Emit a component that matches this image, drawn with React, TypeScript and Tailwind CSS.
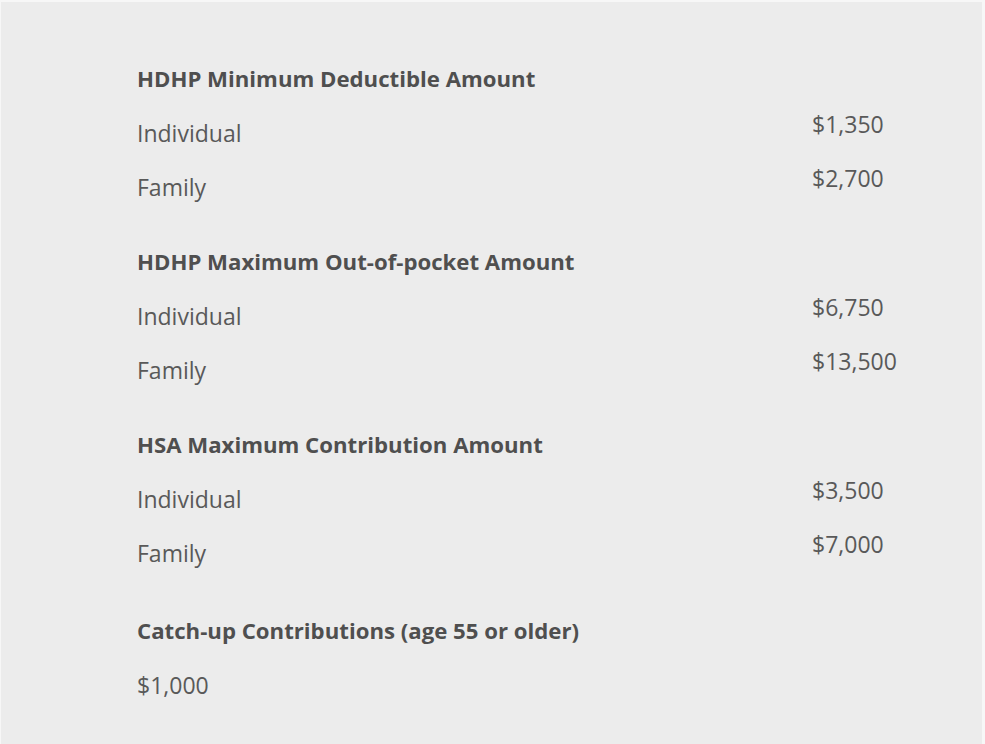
const sections = [
  {
    title: 'HDHP Minimum Deductible Amount',
    rows: [
      { label: 'Individual', value: '$1,350' },
      { label: 'Family', value: '$2,700' },
    ],
  },
  {
    title: 'HDHP Maximum Out-of-pocket Amount',
    rows: [
      { label: 'Individual', value: '$6,750' },
      { label: 'Family', value: '$13,500' },
    ],
  },
  {
    title: 'HSA Maximum Contribution Amount',
    rows: [
      { label: 'Individual', value: '$3,500' },
      { label: 'Family', value: '$7,000' },
    ],
  },
];

export default function App() {
  return (
    <div className="w-[985px] h-[744px] bg-[#f7f7f7] pt-[2px] pl-[1px] pr-[3px] font-['Open_Sans',sans-serif]">
      <div className="h-full bg-[#ececec] pt-[50px] pl-[136px] flex flex-col gap-[21px]">
        {sections.map(section => (
          <div key={section.title} className="flex flex-col">
            <div className="h-[54px] flex items-center text-[22.2px] font-bold text-[#4f4f4f]">
              {section.title}
            </div>
            {section.rows.map(row => (
              <div key={row.label} className="h-[54px] flex items-center text-[23px] text-[#595959]">
                <span className="w-[675px]">{row.label}</span>
                <span className="pb-[17px]">{row.value}</span>
              </div>
            ))}
          </div>
        ))}
        <div className="flex flex-col mt-[3px]">
          <div className="h-[54px] flex items-center text-[22.2px] font-bold text-[#4f4f4f]">
            Catch-up Contributions (age 55 or older)
          </div>
          <div className="h-[54px] flex items-center text-[23px] text-[#595959]">$1,000</div>
        </div>
      </div>
    </div>
  );
}
